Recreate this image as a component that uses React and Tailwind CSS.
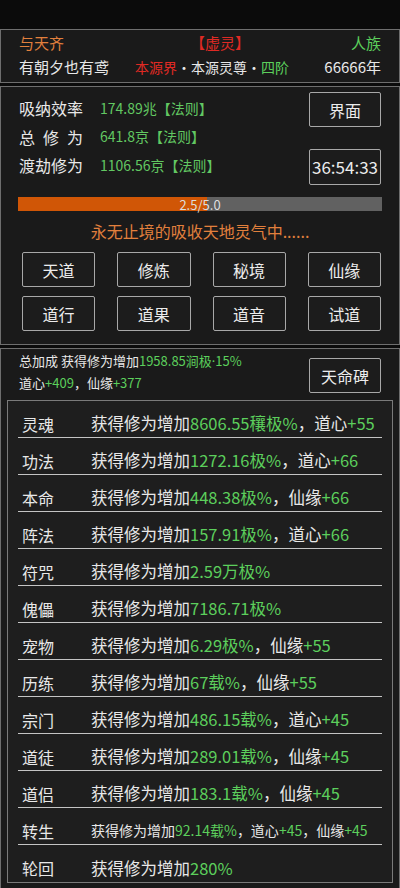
import React from 'react';

const G = ({ children }) => <span className="text-[#5ccf5c]">{children}</span>;

const bonusRows = [
  { name: '灵魂', parts: ['获得修为增加', ['8606.55穰极%'], '，道心', ['+55']] },
  { name: '功法', parts: ['获得修为增加', ['1272.16极%'], '，道心', ['+66']] },
  { name: '本命', parts: ['获得修为增加', ['448.38极%'], '，仙缘', ['+66']] },
  { name: '阵法', parts: ['获得修为增加', ['157.91极%'], '，道心', ['+66']] },
  { name: '符咒', parts: ['获得修为增加', ['2.59万极%']] },
  { name: '傀儡', parts: ['获得修为增加', ['7186.71极%']] },
  { name: '宠物', parts: ['获得修为增加', ['6.29极%'], '，仙缘', ['+55']] },
  { name: '历练', parts: ['获得修为增加', ['67载%'], '，仙缘', ['+55']] },
  { name: '宗门', parts: ['获得修为增加', ['486.15载%'], '，道心', ['+45']] },
  { name: '道徒', parts: ['获得修为增加', ['289.01载%'], '，仙缘', ['+45']] },
  { name: '道侣', parts: ['获得修为增加', ['183.1载%'], '，仙缘', ['+45']] },
  { name: '转生', small: true, parts: ['获得修为增加', ['92.14载%'], '，道心', ['+45'], '，仙缘', ['+45']] },
  { name: '轮回', parts: ['获得修为增加', ['280%']] },
];

const menu = ['天道', '修炼', '秘境', '仙缘', '道行', '道果', '道音', '试道'];

const progress = { cur: 2.5, max: 5.0 };

const BoxButton = ({ children, className = '' }) => (
  <div
    className={`flex items-center justify-center border border-[#a8a8a8] rounded-[2px] bg-[#1c1c1c] text-[#ececec] ${className}`}
  >
    {children}
  </div>
);

// narrow middle dot (the CJK font draws it full width)
const Dot = () => <span className="font-['Noto_Sans',sans-serif]">·</span>;

export default function App() {
  return (
    <div className="w-[400px] h-[888px] overflow-hidden bg-[#0b0b0b] pt-[29px] font-['Noto_Sans_CJK_SC','Noto_Sans',sans-serif] text-[#e8e8e8]">
      {/* header */}
      <div className="bg-[#1a1a1a] border border-[#6e6e6e] px-[18px] pt-[1px] pb-[3px] text-[15px]">
        <div className="flex leading-[24px]">
          <span className="w-[171px] text-[#e2803d]">与天齐</span>
          <span className="text-[#e02a24]">【虚灵】</span>
          <span className="ml-auto text-[#5ccf5c]">人族</span>
        </div>
        <div className="flex items-center leading-[24px]">
          <span className="w-[116px]">有朝夕也有鸢</span>
          <span className="text-[14px]">
            <span className="text-[#e02a24]">本源界</span>·本源灵尊·<G>四阶</G>
          </span>
          <span className="ml-auto">66666年</span>
        </div>
      </div>

      {/* cultivation */}
      <div className="mt-[3px] bg-[#1a1a1a] border border-[#6e6e6e] h-[259px]">
        <div className="flex pl-[18px] pr-[18px]">
          <div className="pt-[7px] flex-1">
            {[
              ['吸纳效率', '174.89兆【法则】', false],
              ['总修为', '641.8京【法则】', true],
              ['渡劫修为', '1106.56京【法则】', false],
            ].map(([k, v, spread]) => (
              <div key={k} className="flex items-center h-[28.5px]">
                <span
                  className={`w-[64px] text-[16px] ${spread ? 'flex justify-between' : ''}`}
                >
                  {spread ? k.split('').map((c) => <span key={c}>{c}</span>) : k}
                </span>
                <span className="ml-[17px] text-[14px] text-[#62c862]">{v}</span>
              </div>
            ))}
          </div>
          <div className="flex flex-col gap-[22px] pt-[5px]">
            <BoxButton className="w-[72px] h-[35px] text-[16px]">界面</BoxButton>
            <BoxButton className="w-[72px] h-[36px] text-[17px]">36:54:33</BoxButton>
          </div>
        </div>

        <div className="mx-[17px] mt-[12px] h-[14px] bg-[#616161] relative">
          <div
            className="h-full bg-[#d05606]"
            style={{ width: `${(progress.cur / progress.max) * 104}%` }}
          />
          <div className="absolute inset-0 flex items-center justify-center text-[13px] leading-none text-[#dedede]">
            {progress.cur.toFixed(1)}/{progress.max.toFixed(1)}
          </div>
        </div>

        <div className="mt-[8px] text-center text-[16px] leading-[24px] text-[#e2803d]">
          永无止境的吸收天地灵气中......
        </div>

        <div className="grid grid-cols-4 gap-x-[22px] gap-y-[9px] pl-[21px] pr-[18px] mt-[9px]">
          {menu.map((m) => (
            <BoxButton key={m} className="h-[35px] text-[16px]">
              {m}
            </BoxButton>
          ))}
        </div>
      </div>

      {/* bonuses */}
      <div className="mt-[3px] bg-[#1a1a1a] border border-[#6e6e6e] h-[560px] pt-[1px]">
        <div className="flex pl-[18px] pr-[18px]">
          <div className="flex-1 text-[13px] leading-[22px]">
            <div>
              总加成 获得修为增加
              <G>
                1958.85涧极<Dot />15%
              </G>
            </div>
            <div>
              道心<G>+409</G>，仙缘<G>+377</G>
            </div>
          </div>
          <BoxButton className="w-[72px] h-[35px] text-[16px] mt-[8px]">天命碑</BoxButton>
        </div>

        <div className="mt-[6px] mx-[6px] border border-[#7a7a7a] bg-[#1e1e1e] px-[10px]">
          {bonusRows.map((r, i) => (
            <div
              key={r.name}
              className={`flex items-center h-[37px] pt-[9px] ${
                i < bonusRows.length - 1 ? 'border-b border-[#c4c4c4]' : ''
              }`}
            >
              <span className="w-[73px] pl-[4px] text-[16px]">{r.name}</span>
              <span className={r.small ? 'text-[14px]' : 'text-[16.5px]'}>
                {r.parts.map((p, j) =>
                  Array.isArray(p) ? <G key={j}>{p[0]}</G> : <span key={j}>{p}</span>
                )}
              </span>
            </div>
          ))}
        </div>
      </div>
    </div>
  );
}
